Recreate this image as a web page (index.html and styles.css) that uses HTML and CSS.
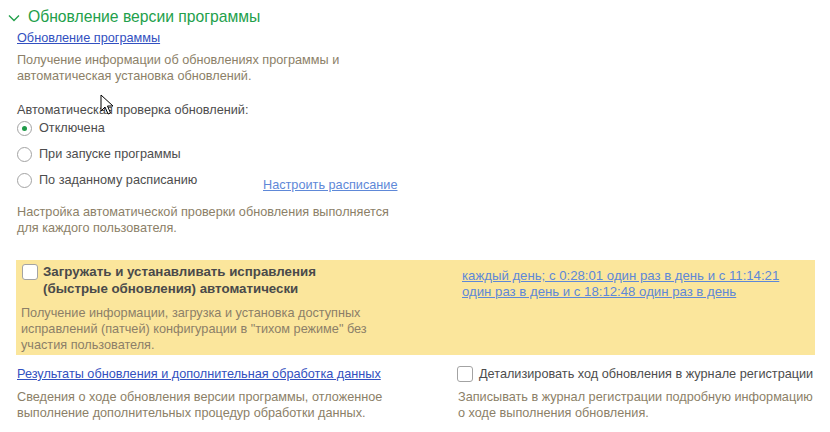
FILE: index.html
```html
<!DOCTYPE html>
<html lang="ru">
<head>
    <meta charset="UTF-8">
    <title>Обновление версии программы</title>
    <link rel="stylesheet" href="styles.css">
</head>
<body>

<div class="group-title">
    <svg class="chevron" width="12" height="8" viewBox="0 0 12 8"><path d="M1 1.5 L6 6.5 L11 1.5" fill="none" stroke="#22a04b" stroke-width="1.4"/></svg>
    <span>Обновление версии программы</span>
</div>

<div class="section">
    <a class="link" href="#">Обновление программы</a>
    <div class="note first-note">Получение информации об обновлениях программы и<br>автоматическая установка обновлений.</div>

    <div class="label">Автоматическая проверка обновлений:</div>
    <div class="radio-list">
        <div class="radio-row"><span class="radio checked"></span>Отключена</div>
        <div class="radio-row"><span class="radio"></span>При запуске программы</div>
        <div class="radio-row">
            <span class="radio"></span><span class="radio-text">По заданному расписанию</span>
            <a class="link light schedule-link" href="#">Настроить расписание</a>
        </div>
    </div>
    <div class="note check-note">Настройка автоматической проверки обновления выполняется<br>для каждого пользователя.</div>
</div>

<div class="band">
    <div class="col-left">
        <div class="check-row">
            <span class="checkbox"></span>
            <span class="bold-label">Загружать и устанавливать исправления<br>(быстрые обновления) автоматически</span>
        </div>
        <div class="note band-note">Получение информации, загрузка и установка доступных<br>исправлений (патчей) конфигурации в "тихом режиме" без<br>участия пользователя.</div>
    </div>
    <div class="col-right">
        <a class="link light schedule-text" href="#">каждый день; с 0:28:01 один раз в день и с 11:14:21<br>один раз в день и с 18:12:48 один раз в день</a>
    </div>
</div>

<div class="bottom">
    <div class="col-left">
        <a class="link" href="#">Результаты обновления и дополнительная обработка данных</a>
        <div class="note">Сведения о ходе обновления версии программы, отложенное<br>выполнение дополнительных процедур обработки данных.</div>
    </div>
    <div class="col-right">
        <div class="check-row plain">
            <span class="checkbox"></span>
            <span class="plain-label">Детализировать ход обновления в журнале регистрации</span>
        </div>
        <div class="note">Записывать в журнал регистрации подробную информацию<br>о ходе выполнения обновления.</div>
    </div>
</div>

<svg class="cursor" width="14" height="22" viewBox="0 0 14 22">
    <path d="M1 1 L1 17 L5 13 L8 20 L10.5 19 L7.5 12 L13 12 Z" fill="#fff" stroke="#000" stroke-width="1" stroke-linejoin="round"/>
</svg>

</body>
</html>
```

FILE: styles.css
```css
body {
    margin: 0;
    padding: 0;
    width: 830px;
    height: 432px;
    overflow: hidden;
    position: relative;
    background-color: #fff;
    color: #4d4d4d;
    font-family: "Liberation Sans", Arial, sans-serif;
    font-size: 12.7px;
    line-height: 16px;
}

.group-title {
    display: flex;
    align-items: center;
    padding: 7px 0 0 8px;
    height: 20px;
    color: #22a04b;
    font-size: 15.7px;
    line-height: 20px;
}

.chevron {
    margin-right: 8px;
    margin-top: 1px;
}

.section {
    padding-left: 17px;
    margin-top: 3px;
}

.link {
    color: #3250c0;
    text-decoration: underline;
    display: inline-block;
}

.link.light {
    color: #5e88d8;
}

.note {
    color: #8c7f68;
    margin-top: 6px;
}

.first-note {
    margin-top: 6px;
}

.label {
    margin-top: 18px;
}

.radio-list {
    margin-top: 2px;
}

.radio-row {
    display: flex;
    align-items: center;
    height: 16px;
    margin-bottom: 10px;
}

.radio {
    width: 13px;
    height: 13px;
    border: 1px solid #a3a3a3;
    border-radius: 50%;
    background-color: #fff;
    margin-right: 7px;
    position: relative;
    flex-shrink: 0;
}

.radio.checked::after {
    content: "";
    position: absolute;
    left: 4px;
    top: 4px;
    width: 5px;
    height: 5px;
    border-radius: 50%;
    background-color: #1f9a48;
}

.radio-text {
    width: 224px;
}

.schedule-link {
    margin-top: 10px;
}

.check-note {
    margin-top: 16px;
}

.band {
    display: grid;
    grid-template-columns: 441px 1fr;
    margin: 24px 15px 0 16px;
    height: 95px;
    background-color: #fbe69c;
}

.band .col-left {
    padding: 3px 0 0 5px;
}

.band .col-right {
    padding: 8px 0 0 5px;
}

.schedule-text {
    font-size: 13.2px;
}

.check-row {
    display: flex;
    align-items: flex-start;
}

.checkbox {
    width: 14px;
    height: 14px;
    border: 1px solid #a3a3a3;
    border-radius: 3px;
    background-color: #fff;
    flex-shrink: 0;
    margin: 1px 6px 0 1px;
}

.bold-label {
    font-weight: bold;
    font-size: 13.3px;
    line-height: 17px;
    color: #4a4a4a;
    margin-left: -1px;
}

.band-note {
    margin-top: 8px;
}

.bottom {
    display: grid;
    grid-template-columns: 441px 1fr;
    margin: 11px 0 0 16px;
}

.bottom .col-left {
    padding-left: 1px;
}

.bottom .note {
    margin-top: 7px;
}

.bottom .col-right {
    white-space: nowrap;
    overflow: hidden;
}

.check-row.plain {
    align-items: center;
}

.check-row.plain .checkbox {
    margin: 0 6px 0 0;
}

.bottom .col-right .note {
    padding-left: 1px;
}

.cursor {
    position: absolute;
    left: 100px;
    top: 94px;
}
```
